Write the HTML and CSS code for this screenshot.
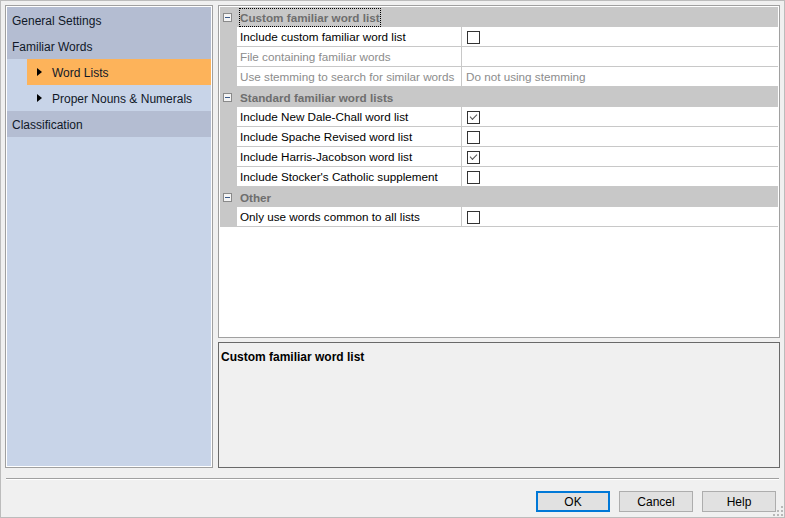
FILE: index.html
```html
<!DOCTYPE html>
<html>
<head>
<meta charset="utf-8">
<link rel="stylesheet" href="styles.css">
</head>
<body>
<div class="window">
  <div class="main">
    <div class="nav">
      <div class="nav-inner">
        <div class="nav-item top">General Settings</div>
        <div class="nav-item top">Familiar Words</div>
        <div class="nav-item sub selected"><span class="tri"></span>Word Lists</div>
        <div class="nav-item sub"><span class="tri"></span>Proper Nouns &amp; Numerals</div>
        <div class="nav-item top">Classification</div>
      </div>
    </div>
    <div class="right">
      <div class="grid">
        <div class="grid-inner">
          <div class="cat"><span class="minus"></span><span class="cat-label focus">Custom familiar word list</span></div>
          <div class="row"><div class="gut"></div><div class="name">Include custom familiar word list</div><div class="val"><span class="cb"></span></div></div>
          <div class="row"><div class="gut"></div><div class="name dis">File containing familiar words</div><div class="val"></div></div>
          <div class="row"><div class="gut"></div><div class="name dis">Use stemming to search for similar words</div><div class="val dis">Do not using stemming</div></div>
          <div class="cat"><span class="minus"></span><span class="cat-label">Standard familiar word lists</span></div>
          <div class="row"><div class="gut"></div><div class="name">Include New Dale-Chall word list</div><div class="val"><span class="cb checked"></span></div></div>
          <div class="row"><div class="gut"></div><div class="name">Include Spache Revised word list</div><div class="val"><span class="cb"></span></div></div>
          <div class="row"><div class="gut"></div><div class="name">Include Harris-Jacobson word list</div><div class="val"><span class="cb checked"></span></div></div>
          <div class="row"><div class="gut"></div><div class="name">Include Stocker's Catholic supplement</div><div class="val"><span class="cb"></span></div></div>
          <div class="cat"><span class="minus"></span><span class="cat-label">Other</span></div>
          <div class="row"><div class="gut"></div><div class="name">Only use words common to all lists</div><div class="val"><span class="cb"></span></div></div>
        </div>
      </div>
      <div class="desc">
        <div class="desc-title">Custom familiar word list</div>
      </div>
    </div>
  </div>
  <div class="sep"></div>
  <div class="buttons">
    <button class="btn default">OK</button>
    <button class="btn">Cancel</button>
    <button class="btn">Help</button>
  </div>
  <div class="grip">
    <svg width="10" height="10" viewBox="0 0 10 10">
      <rect x="8" y="0" width="2" height="2" fill="#b8b8b8"/>
      <rect x="4" y="4" width="2" height="2" fill="#b8b8b8"/>
      <rect x="8" y="4" width="2" height="2" fill="#b8b8b8"/>
      <rect x="0" y="8" width="2" height="2" fill="#b8b8b8"/>
      <rect x="4" y="8" width="2" height="2" fill="#b8b8b8"/>
      <rect x="8" y="8" width="2" height="2" fill="#b8b8b8"/>
    </svg>
  </div>
</div>
</body>
</html>
```
FILE: styles.css
```css
html, body {
  margin: 0;
  padding: 0;
  background: #f0f0f0;
}
body {
  font-family: "Liberation Sans", Arial, sans-serif;
  font-size: 12px;
  color: #000;
}
.window {
  position: relative;
  width: 785px;
  height: 518px;
  box-sizing: border-box;
  border: 1px solid #bcbcbc;
  background: #f0f0f0;
  padding: 4px 4px 0 4px;
  display: flex;
  flex-direction: column;
}
.main {
  display: flex;
  gap: 5px;
  height: 463px;
}
.nav {
  width: 208px;
  box-sizing: border-box;
  border: 1px solid #a0a0a0;
  background: #fff;
  padding: 1px;
}
.nav-inner {
  height: 100%;
  background: #c8d4e8;
}
.nav-item {
  height: 26px;
  box-sizing: border-box;
  padding-top: 2px;
  line-height: 24px;
  white-space: nowrap;
  color: #101828;
}
.nav-item.top {
  background: #b4bdd2;
  padding-left: 5px;
}
.nav-item.sub {
  margin-left: 20px;
  padding-left: 10px;
  display: flex;
  align-items: center;
}
.nav-item.selected {
  background: #fdb35a;
}
.tri {
  width: 0;
  height: 0;
  border-top: 4px solid transparent;
  border-bottom: 4px solid transparent;
  border-left: 5px solid #000;
  margin-right: 10px;
  margin-top: -2px;
}
.right {
  flex: 1;
  display: flex;
  flex-direction: column;
  gap: 4px;
}
.grid {
  height: 333px;
  box-sizing: border-box;
  border: 1px solid #a0a0a0;
  background: #fff;
  padding: 1px;
  font-size: 11.7px;
}
.grid-inner {
  height: 100%;
  background: #fff;
}
.cat {
  height: 20px;
  background: #c8c8c8;
  display: flex;
  align-items: center;
}
.minus {
  width: 7px;
  height: 7px;
  border: 1px solid #8a8a8a;
  background: #f4f4f4;
  margin-left: 3px;
  margin-right: 8px;
  position: relative;
}
.minus::after {
  content: "";
  position: absolute;
  left: 1px;
  top: 3px;
  width: 5px;
  height: 1px;
  background: #3a5a8a;
}
.cat-label {
  font-weight: bold;
  color: #6e6e6e;
  height: 19px;
  box-sizing: border-box;
  padding: 1px 1px 0 1px;
  line-height: 18px;
  margin-left: -1px;
}
.cat-label.focus {
  outline: 1px dotted #000;
  outline-offset: -1px;
}
.row {
  height: 20px;
  display: flex;
}
.gut {
  width: 17px;
  background: #c8c8c8;
}
.name {
  width: 225px;
  box-sizing: border-box;
  padding-left: 3px;
  padding-top: 1px;
  border-bottom: 1px solid #c8c8c8;
  border-right: 1px solid #c8c8c8;
  line-height: 18px;
  white-space: nowrap;
  overflow: hidden;
}
.val {
  flex: 1;
  box-sizing: border-box;
  padding-left: 4px;
  padding-top: 1px;
  border-bottom: 1px solid #c8c8c8;
  line-height: 18px;
  display: flex;
  align-items: center;
  white-space: nowrap;
}
.dis {
  color: #8c8c8c;
}
.cb {
  width: 11px;
  height: 11px;
  border: 1px solid #333;
  background: #fff;
  margin-left: 1px;
  position: relative;
}
.cb.checked::after {
  content: "";
  position: absolute;
  left: 2px;
  top: 2px;
  width: 6px;
  height: 3px;
  border-left: 1.5px solid #555;
  border-bottom: 1.5px solid #555;
  transform: rotate(-45deg);
  transform-origin: center;
}
.desc {
  flex: 1;
  box-sizing: border-box;
  border: 1px solid #696969;
  background: #f0f0f0;
  padding: 7px 2px;
}
.desc-title {
  font-weight: bold;
}
.sep {
  height: 1px;
  background: #a0a0a0;
  border-bottom: 1px solid #fff;
  margin-top: 10px;
  margin-left: 1px;
  margin-right: 1px;
}
.buttons {
  display: flex;
  justify-content: flex-end;
  gap: 9px;
  margin-top: 11px;
  padding-right: 4px;
}
.btn {
  width: 74px;
  height: 21px;
  box-sizing: border-box;
  border: 1px solid #adadad;
  background: #e1e1e1;
  font-family: "Liberation Sans", Arial, sans-serif;
  font-size: 12px;
  color: #000;
  padding: 0;
}
.btn.default {
  border: 2px solid #0078d7;
}
.grip {
  position: absolute;
  right: 1px;
  bottom: 1px;
  width: 10px;
  height: 10px;
  line-height: 0;
}
```
